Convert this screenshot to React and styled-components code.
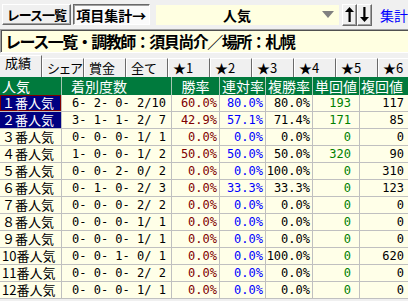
import React from 'react';
import styled, { createGlobalStyle } from 'styled-components';

const GlobalStyle = createGlobalStyle`
  html, body {
    margin: 0;
    padding: 0;
    background: #f0f0f0;
    overflow: hidden;
  }
  body {
    font-family: "Noto Sans CJK JP", sans-serif;
    color: #000;
  }
`;

const COLS = '62px 110px 48px 46px 47px 47px 48px';

const Page = styled.div`
  width: 408px;
  height: 301px;
  display: flex;
  flex-direction: column;
  overflow: hidden;
`;

const TopBar = styled.div`
  display: flex;
  align-items: center;
  height: 29px;
  padding-left: 2px;
  box-sizing: border-box;
  white-space: nowrap;
`;

const Button = styled.div`
  width: ${p => p.$w}px;
  height: 21px;
  margin-right: ${p => p.$mr || 0}px;
  box-sizing: border-box;
  display: flex;
  align-items: center;
  justify-content: center;
  font-size: ${p => p.$fs || 14}px;
  font-weight: bold;
  line-height: 1;
  letter-spacing: ${p => p.$ls || 0}px;
  background: ${p => (p.$pressed ? '#fbfbfb' : '#f0f0f0')};
  border: 1px solid;
  border-color: ${p => (p.$pressed ? '#696969 #ffffff #ffffff #696969' : '#ffffff #696969 #696969 #ffffff')};
  box-shadow: ${p => (p.$pressed ? 'inset 1px 1px #a0a0a0' : 'inset -1px -1px #a0a0a0')};
  overflow: hidden;
`;

const Select = styled.div`
  width: 187px;
  height: 20px;
  margin-right: 3px;
  background: #ffffe1;
  display: flex;
  align-items: center;
  font-size: 14px;
  font-weight: bold;
  line-height: 1;
`;

const SelectLabel = styled.span`
  flex: 1;
  text-align: center;
  padding-right: 4px;
`;

const Caret = styled.span`
  width: 0;
  height: 0;
  margin-right: 5px;
  border-left: 6px solid transparent;
  border-right: 6px solid transparent;
  border-top: 7px solid #808080;
`;

const ArrowButton = styled(Button)`
  width: 15px;
  height: 22px;
`;

const LinkText = styled.span`
  margin-left: 8px;
  color: #0000ff;
  font-size: 14px;
  line-height: 1;
`;

const TitleBox = styled.div`
  height: 24px;
  box-sizing: border-box;
  background: #ffffe1;
  border-top: 1px solid #a0a0a0;
  border-left: 1px solid #a0a0a0;
  border-bottom: 1px solid #ffffff;
  box-shadow: inset 1px 1px #505050;
  display: flex;
  align-items: center;
  padding-left: 4px;
  font-size: 16px;
  font-weight: bold;
  letter-spacing: -1.5px;
  white-space: nowrap;
  line-height: 1;
`;

const TabStrip = styled.div`
  display: flex;
  align-items: flex-end;
  height: 24px;
  white-space: nowrap;
`;

const Tab = styled.div`
  width: 42px;
  flex: none;
  height: ${p => (p.$active ? 22 : 19)}px;
  box-sizing: border-box;
  padding-left: ${p => (p.$active ? 5 : 4)}px;
  border-top: 1px solid #ffffff;
  border-left: ${p => (p.$active ? 0 : 1)}px solid #ffffff;
  border-right: 1px solid #696969;
  background: #f0f0f0;
  font-size: 13px;
  letter-spacing: ${p => p.$ls || 0}px;
  line-height: ${p => (p.$active ? 14 : 17)}px;
  overflow: hidden;
`;

const HeadRow = styled.div`
  display: grid;
  grid-template-columns: ${COLS};
  height: 18px;
  background: #007a3d;
  color: #ffffff;
`;

const HeadCell = styled.div`
  box-sizing: border-box;
  padding-left: ${p => p.$pl || 0}px;
  border-right: 1px solid ${p => (p.$last ? 'transparent' : '#a8c8b4')};
  font-size: 14px;
  line-height: 18px;
  text-align: ${p => p.$align || 'left'};
  white-space: nowrap;
  overflow: hidden;
`;

const Row = styled.div`
  display: grid;
  grid-template-columns: ${COLS};
  height: 17px;
  box-sizing: border-box;
  border-bottom: 1px solid #c0c0c0;
  background: #ffffe8;
`;

const NameCell = styled.div`
  box-sizing: border-box;
  padding-left: 2px;
  border-right: 1px solid #c0c0c0;
  background: ${p => (p.$sel ? '#000080' : 'transparent')};
  color: ${p => (p.$sel ? '#ffffff' : '#000000')};
  box-shadow: ${p => (p.$focus ? 'inset 0 0 0 1px #800000' : 'none')};
  font-size: 13px;
  line-height: 16px;
  white-space: nowrap;
  overflow: hidden;
`;

const NumCell = styled.div`
  box-sizing: border-box;
  padding-left: ${p => p.$pl || 0}px;
  padding-right: ${p => p.$pr || 0}px;
  border-right: 1px solid ${p => (p.$last ? 'transparent' : '#c0c0c0')};
  color: ${p => p.$color || '#000000'};
  font-family: "DejaVu Sans Mono", "Liberation Mono", monospace;
  font-size: 12px;
  line-height: 16px;
  text-align: ${p => p.$align || 'right'};
  white-space: pre;
  overflow: hidden;
`;

const Arrow = ({ down }) => (
  <svg width="9" height="15" viewBox="0 0 9 15">
    <g transform={down ? 'rotate(180 4.5 7.5)' : undefined}>
      <polygon points="4.5,0 0,5 9,5" fill="#000" />
      <rect x="3.5" y="4" width="2.2" height="11" fill="#000" />
    </g>
  </svg>
);

const rows = [
  ['１番人気', '6- 2- 0- 2/10', '60.0%', '80.0%', '80.0%', '193', '117'],
  ['２番人気', '3- 1- 1- 2/ 7', '42.9%', '57.1%', '71.4%', '171', '85'],
  ['３番人気', '0- 0- 0- 1/ 1', '0.0%', '0.0%', '0.0%', '0', '0'],
  ['４番人気', '1- 0- 0- 1/ 2', '50.0%', '50.0%', '50.0%', '320', '90'],
  ['５番人気', '0- 0- 2- 0/ 2', '0.0%', '0.0%', '100.0%', '0', '310'],
  ['６番人気', '0- 1- 0- 2/ 3', '0.0%', '33.3%', '33.3%', '0', '123'],
  ['７番人気', '0- 0- 0- 2/ 2', '0.0%', '0.0%', '0.0%', '0', '0'],
  ['８番人気', '0- 0- 0- 1/ 1', '0.0%', '0.0%', '0.0%', '0', '0'],
  ['９番人気', '0- 0- 0- 1/ 1', '0.0%', '0.0%', '0.0%', '0', '0'],
  ['10番人気', '0- 0- 1- 0/ 1', '0.0%', '0.0%', '100.0%', '0', '620'],
  ['11番人気', '0- 0- 0- 2/ 2', '0.0%', '0.0%', '0.0%', '0', '0'],
  ['12番人気', '0- 0- 0- 1/ 1', '0.0%', '0.0%', '0.0%', '0', '0'],
];

const tabs = ['成績', 'シェア', '賞金', '全て', '★1', '★2', '★3', '★4', '★5', '★6'];

export default function App() {
  return (
    <Page>
      <GlobalStyle />
      <TopBar>
        <Button $w={70} $mr={2} $fs={13} $ls={-1}>レース一覧</Button>
        <Button $w={78} $mr={6} $pressed>項目集計→</Button>
        <Select>
          <SelectLabel>人気</SelectLabel>
          <Caret />
        </Select>
        <ArrowButton><Arrow /></ArrowButton>
        <ArrowButton><Arrow down /></ArrowButton>
        <LinkText>集計</LinkText>
      </TopBar>
      <TitleBox>レース一覧・調教師：須貝尚介／場所：札幌</TitleBox>
      <TabStrip>
        {tabs.map((t, i) => (
          <Tab key={t} $active={i === 0} $ls={t.length > 2 ? -1.5 : 0}>{t}</Tab>
        ))}
      </TabStrip>
      <HeadRow>
        <HeadCell $pl={2}>人気</HeadCell>
        <HeadCell $pl={9}>着別度数</HeadCell>
        <HeadCell $align="center">勝率</HeadCell>
        <HeadCell $pl={2}>連対率</HeadCell>
        <HeadCell $pl={2}>複勝率</HeadCell>
        <HeadCell $pl={2}>単回値</HeadCell>
        <HeadCell $pl={1} $last>複回値</HeadCell>
      </HeadRow>
      {rows.map((r, i) => (
        <Row key={r[0]}>
          <NameCell $sel={i < 2} $focus={i === 0}>{r[0]}</NameCell>
          <NumCell $align="left" $pl={10}>{r[1]}</NumCell>
          <NumCell $pr={2} $color="#800000">{r[2]}</NumCell>
          <NumCell $pr={2} $color="#0000ff">{r[3]}</NumCell>
          <NumCell $pr={2}>{r[4]}</NumCell>
          <NumCell $pr={8} $color="#008000">{r[5]}</NumCell>
          <NumCell $pr={3} $last>{r[6]}</NumCell>
        </Row>
      ))}
    </Page>
  );
}
